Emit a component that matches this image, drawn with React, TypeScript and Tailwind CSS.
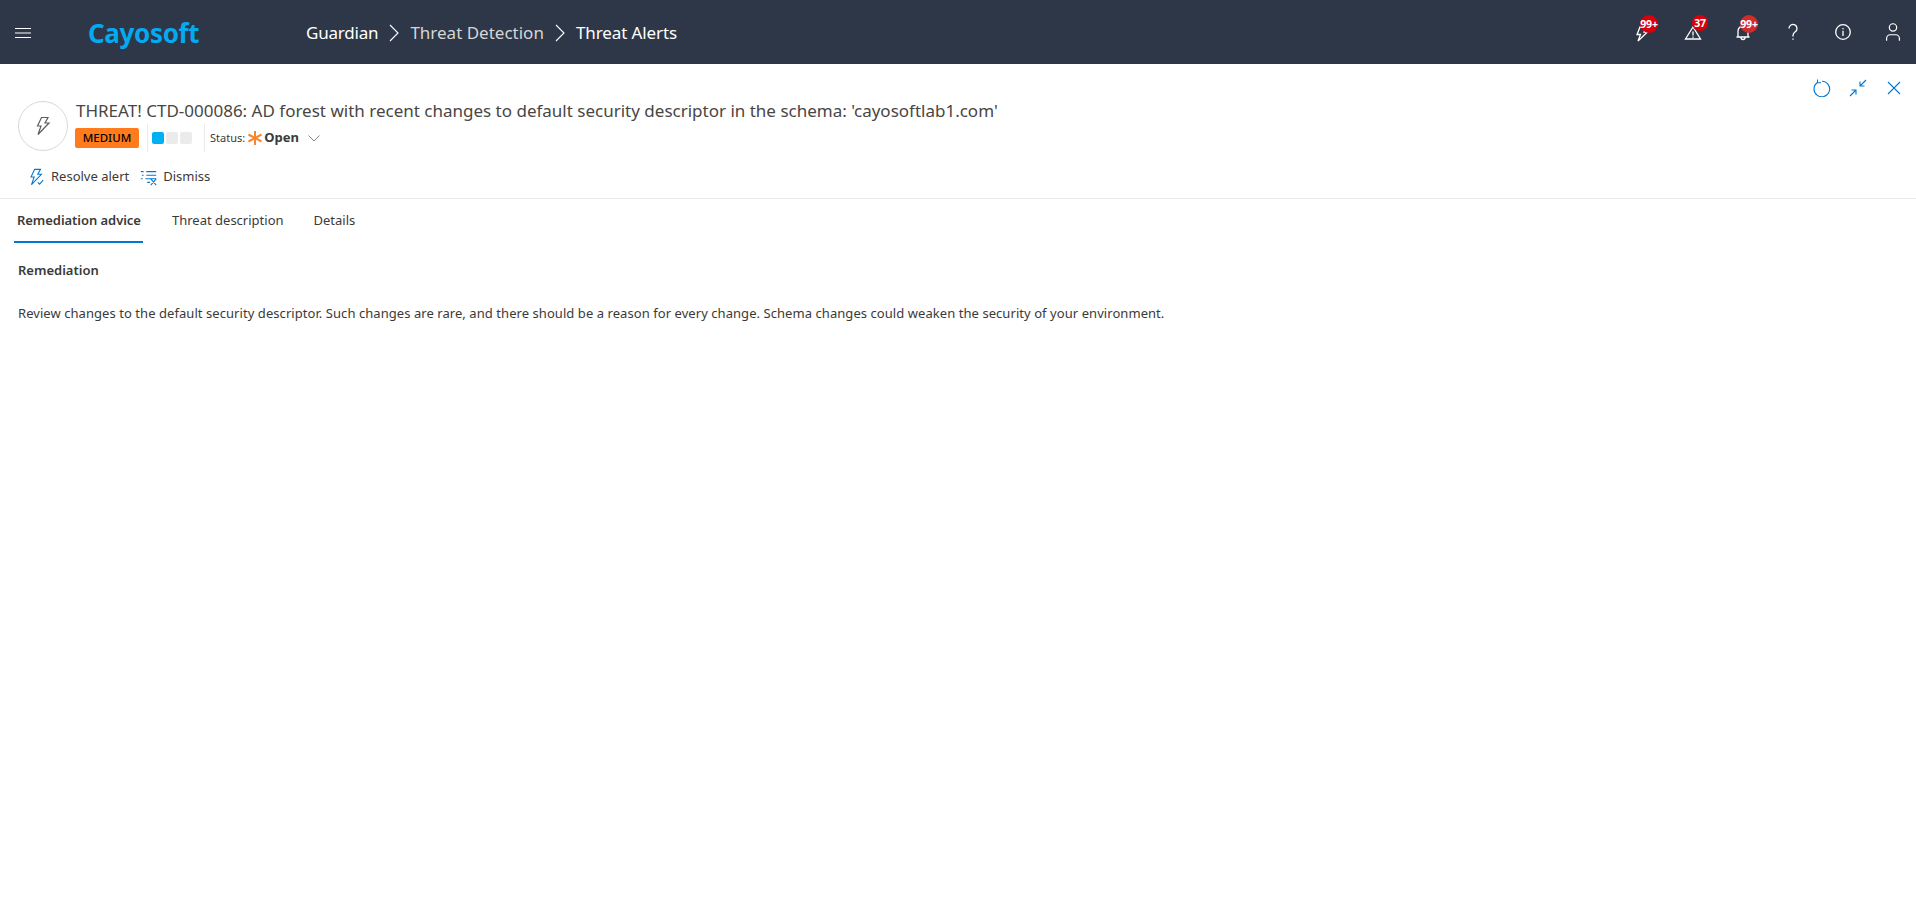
import React from "react";
import { User } from "lucide-react";

const font = "font-['Noto_Sans','Open_Sans',sans-serif]";

function Bolt({ className = "", check = false }: { className?: string; check?: boolean }) {
  return (
    <svg viewBox="0 0 20 20" fill="none" stroke="currentColor" strokeWidth="1.2" className={className}>
      <path d="M8.5 1.5h6.5l-3 5.5h4L5 18.5l3-8.5H4.5z" strokeLinejoin="miter" />
      {check && <path d="M12 16l2 2 4-4.5" />}
    </svg>
  );
}

function Crumb() {
  return (
    <svg viewBox="0 0 12 18" fill="none" stroke="currentColor" strokeWidth="1.1" className="w-[12px] h-[18px] mx-[10px]">
      <path d="M2 1l8 8-8 8" />
    </svg>
  );
}

function Badge({ label, left, size, color = "bg-[#d9000d]" }: { label: string; left: string; size: string; color?: string }) {
  return (
    <span className={`absolute -top-[7px] ${left} ${size} flex items-center justify-center rounded-full ${color} text-white text-[10.5px] font-bold leading-none tracking-[-0.2px]`}>
      {label}
    </span>
  );
}

function TopIcons() {
  return (
    <div className="flex items-center gap-[30px] pr-[13px] text-white">
      <div className="relative w-[20px] h-[20px]">
        <svg viewBox="0 0 20 20" fill="none" stroke="currentColor" strokeWidth="1.3" className="w-[20px] h-[20px]">
          <path d="M7 5h6l-2 5h3.5L5 19l2.5-6.5H4z" />
        </svg>
        <Badge label="99+" left="left-[7px]" size="w-[18px] h-[18px]" />
      </div>
      <div className="relative w-[20px] h-[20px]">
        <svg viewBox="0 0 20 20" fill="none" stroke="currentColor" strokeWidth="1.3" className="w-[20px] h-[20px]">
          <path d="M10 5 2.5 17h15zM10 9.5v4M10 14.5v1.3" />
        </svg>
        <Badge label="37" left="left-[9px]" size="w-[16px] h-[16px]" />
      </div>
      <div className="relative w-[20px] h-[20px]">
        <svg viewBox="0 0 20 20" fill="none" stroke="currentColor" strokeWidth="1.3" className="w-[20px] h-[20px]">
          <path d="M5 15V9a5 5 0 0 1 10 0v6zM3.5 15h13M8 15.5a2 2 0 0 0 4 0" />
        </svg>
        <Badge label="99+" left="left-[7px]" size="w-[18px] h-[18px]" color="bg-[#d02c2c]" />
      </div>
      <svg viewBox="0 0 20 20" fill="none" stroke="currentColor" strokeWidth="1.3" className="w-[20px] h-[20px]">
        <path d="M6 6.5a4 4 0 1 1 6.2 3.3C10.700 10.900 10 11.800 10 13.500v1M10 16.600v1.200" />
      </svg>
      <svg viewBox="0 0 20 20" fill="none" stroke="currentColor" strokeWidth="1.3" className="w-[20px] h-[20px]">
        <circle cx="10" cy="10" r="7.300" />
        <path d="M10 8.800v5.200M10 6v1.300" />
      </svg>
      <User className="w-[22px] h-[22px] -mx-[1px]" strokeWidth={1.35} />
    </div>
  );
}

export default function App() {
  return (
    <div className={`${font} w-full min-h-[910px] bg-white text-[#3b3a39]`}>
      <header className="flex items-center justify-between h-[64px] bg-[#2d3748]">
        <div className="flex items-center">
          <svg viewBox="0 0 16 10" fill="none" stroke="white" strokeWidth="1" className="ml-[15px] w-[16px] h-[10px] mt-[1px]">
            <path d="M0 .5h16M0 5h16M0 9.500h16" />
          </svg>
          <span className="ml-[57px] w-[218px] text-[26px] font-bold text-[#04a9f0] tracking-[-0.35px] leading-none mt-[2px]">Cayosoft</span>
          <nav className="flex items-center text-[17px] text-white mt-[1px]">
            <span className="tracking-[-0.2px]">Guardian</span>
            <Crumb />
            <span className="text-[#d6d6d6]">Threat Detection</span>
            <Crumb />
            <span className="tracking-[-0.1px]">Threat Alerts</span>
          </nav>
        </div>
        <TopIcons />
      </header>

      <section className="relative h-[135px] border-b border-[#edebe9]">
        <div className="absolute right-[15px] top-[15px] flex items-center text-[#0078d4]">
          <svg viewBox="0 0 18 18" fill="none" stroke="currentColor" strokeWidth="1.1" className="w-[18px] h-[18px]">
            <path d="M4.500 3.500a7.800 7.800 0 1 0 4.500-1.300M4.500 .5v3.300h3.500" />
          </svg>
          <svg viewBox="0 0 18 18" fill="none" stroke="currentColor" strokeWidth="1.1" className="w-[18px] h-[18px] ml-[18px] mr-[20px]">
            <path d="M17 1l-6 6M11 2.500V7h4.500M1 17l6-6M2.500 11H7v4.500" />
          </svg>
          <svg viewBox="0 0 14 14" fill="none" stroke="currentColor" strokeWidth="1.1" className="w-[14px] h-[14px]">
            <path d="M1 1l12 12M13 1L1 13" />
          </svg>
        </div>

        <div className="flex pl-[18px] pt-[37px]">
          <div className="flex items-center justify-center w-[50px] h-[50px] rounded-full border border-[#d8d8d8] text-[#605e5c]">
            <Bolt className="w-[20px] h-[20px]" />
          </div>
          <div className="ml-[7px] -mt-[3px]">
            <h1 className="ml-[1px] text-[17px] leading-[26px] text-[#484644]">
              THREAT! CTD-000086: AD forest with recent changes to default security descriptor in the schema: 'cayosoftlab1.com'
            </h1>
            <div className="flex items-center h-[26px] mt-[1px] text-[11px]">
              <span className="w-[64px] h-[20px] rounded-[2px] bg-[#ff7b1c] text-black text-[11.5px] font-medium leading-[20px] text-center">MEDIUM</span>
              <span className="w-px h-[28px] bg-[#edebe9] ml-[8px] mr-[4px]" />
              <span className="w-[12px] h-[12px] rounded-[2px] bg-[#00b0f0]" />
              <span className="w-[12px] h-[12px] rounded-[2px] bg-[#ebebeb] ml-[2px]" />
              <span className="w-[12px] h-[12px] rounded-[2px] bg-[#ebebeb] ml-[2px]" />
              <span className="w-px h-[28px] bg-[#edebe9] ml-[12px] mr-[5px]" />
              <span>Status:</span>
              <svg viewBox="0 0 14 14" stroke="#f7862a" strokeWidth="2" className="w-[14px] h-[14px] ml-[3px]">
                <path d="M7 0v14M.5 3.500l13 7M13.500 3.500l-13 7" />
              </svg>
              <span className="ml-[2px] text-[13px] font-bold">Open</span>
              <svg viewBox="0 0 12 7" fill="none" stroke="#8a8886" strokeWidth="1" className="w-[12px] h-[7px] ml-[9px]">
                <path d="M.5 .5L6 6l5.500-5.500" />
              </svg>
            </div>
          </div>
        </div>

        <div className="flex items-center pl-[27px] pt-[16px] text-[13px]">
          <Bolt check className="w-[18px] h-[18px] text-[#0078d4]" />
          <span className="ml-[6px]">Resolve alert</span>
          <svg viewBox="0 0 20 20" fill="none" stroke="#0078d4" strokeWidth="1.2" className="w-[18px] h-[18px] ml-[11px]">
            <path d="M1 4h3M7 4h11M2 8h2M7 8h11M1 12h2M6 12h12M8 16h3M12 12l6 7M18 12l-6 7" />
          </svg>
          <span className="ml-[5px]">Dismiss</span>
        </div>
      </section>

      <nav className="flex h-[44px] text-[13px] pl-[14px]">
        <span className="w-[129px] h-[44px] pl-[3px] leading-[42px] font-semibold border-b-2 border-[#0078d4] tracking-[-0.05px] whitespace-nowrap">Remediation advice</span>
        <span className="ml-[29px] leading-[42px]">Threat description</span>
        <span className="ml-[30px] leading-[42px]">Details</span>
      </nav>

      <main className="pl-[18px] text-[13px]">
        <h2 className="mt-[18px] font-semibold leading-[18px]">Remediation</h2>
        <p className="mt-[25px] leading-[18px] tracking-[0.06px]">
          Review changes to the default security descriptor. Such changes are rare, and there should be a reason for every change. Schema changes could weaken the security of your environment.
        </p>
      </main>
    </div>
  );
}
